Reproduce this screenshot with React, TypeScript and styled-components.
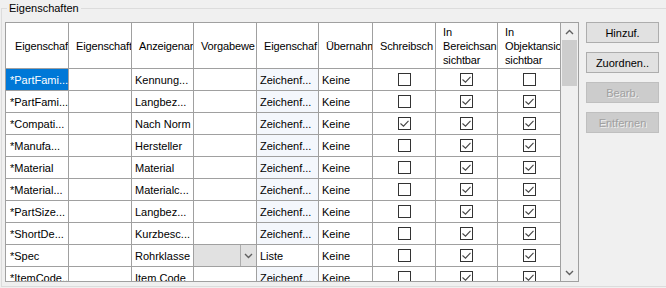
import styled, { createGlobalStyle } from 'styled-components';

const GlobalStyle = createGlobalStyle`
  html, body {
    margin: 0;
    padding: 0;
    background: #f0f0f0;
    overflow: hidden;
  }
  body {
    font-family: "Liberation Sans", Arial, sans-serif;
    font-size: 11px;
    color: #000;
  }
`;

const colWidths = [63, 63, 62, 63, 62, 54, 63, 62, 63];

const headers: string[][] = [
  ['Eigenschaf'],
  ['Eigenschaft'],
  ['Anzeigenar'],
  ['Vorgabewe'],
  ['Eigenschaf'],
  ['Übernahm'],
  ['Schreibsch'],
  ['In', 'Bereichsan', 'sichtbar'],
  ['In', 'Objektansic', 'sichtbar'],
];

interface RowData {
  name: string;
  label: string;
  type: string;
  combo?: boolean;
  write: boolean;
  area: boolean;
  obj: boolean;
}

const rows: RowData[] = [
  { name: '*PartFami...', label: 'Kennung...', type: 'Zeichenf...', write: false, area: true, obj: false },
  { name: '*PartFami...', label: 'Langbez...', type: 'Zeichenf...', write: false, area: true, obj: true },
  { name: '*Compati...', label: 'Nach Norm', type: 'Zeichenf...', write: true, area: true, obj: true },
  { name: '*Manufa...', label: 'Hersteller', type: 'Zeichenf...', write: false, area: true, obj: true },
  { name: '*Material', label: 'Material', type: 'Zeichenf...', write: false, area: true, obj: true },
  { name: '*Material...', label: 'Materialc...', type: 'Zeichenf...', write: false, area: true, obj: true },
  { name: '*PartSize...', label: 'Langbez...', type: 'Zeichenf...', write: false, area: true, obj: true },
  { name: '*ShortDe...', label: 'Kurzbesc...', type: 'Zeichenf...', write: false, area: true, obj: true },
  { name: '*Spec', label: 'Rohrklasse', type: 'Liste', combo: true, write: false, area: true, obj: true },
  { name: '*ItemCode...', label: 'Item Code', type: 'Zeichenf...', write: false, area: true, obj: true },
];

const App = () => {
  return (
    <>
      <GlobalStyle />
      <Group>
        <Legend>Eigenschaften</Legend>
        <Content>
          <GridFrame>
            <Table>
              {headers.map((lines, i) => (
                <HeadCell key={i} first={i === 0}>
                  <HeadText>
                    {lines.map((l, j) => (
                      <span key={j}>{l}</span>
                    ))}
                  </HeadText>
                </HeadCell>
              ))}
              {rows.map((r, i) => (
                <RowCells key={i} row={r} selected={i === 0} />
              ))}
            </Table>
            <ScrollBar>
              <ScrollArrow>
                <Chevron up />
              </ScrollArrow>
              <Track>
                <Thumb />
              </Track>
              <ScrollArrow>
                <Chevron />
              </ScrollArrow>
            </ScrollBar>
          </GridFrame>
          <Buttons>
            <Button>Hinzuf.</Button>
            <Button>Zuordnen..</Button>
            <Button disabled>Bearb.</Button>
            <Button disabled>Entfernen</Button>
          </Buttons>
        </Content>
      </Group>
    </>
  );
};

const RowCells = ({ row, selected }: { row: RowData; selected: boolean }) => (
  <>
    <Cell selected={selected} first>{row.name}</Cell>
    <Cell />
    <Cell>{row.label}</Cell>
    <Cell>
      {row.combo && (
        <Combo>
          <ComboField />
          <ComboButton>
            <Chevron />
          </ComboButton>
        </Combo>
      )}
    </Cell>
    <Cell tinted={!row.combo}>{row.type}</Cell>
    <Cell>Keine</Cell>
    <CheckCell>
      <CheckBox checked={row.write} />
    </CheckCell>
    <CheckCell>
      <CheckBox checked={row.area} />
    </CheckCell>
    <CheckCell>
      <CheckBox checked={row.obj} />
    </CheckCell>
  </>
);

const CheckBox = ({ checked }: { checked: boolean }) => (
  <Box>
    {checked && (
      <svg width="11" height="11" viewBox="0 0 11 11">
        <path d="M1.5 5.5 L4.5 8.2 L9.5 2.8" fill="none" stroke="#444" strokeWidth="1.1" />
      </svg>
    )}
  </Box>
);

const Chevron = ({ up }: { up?: boolean }) => (
  <svg width="9" height="6" viewBox="0 0 9 6">
    <path
      d={up ? 'M1 5 L4.5 1.5 L8 5' : 'M1 1 L4.5 4.5 L8 1'}
      fill="none"
      stroke="#606060"
      strokeWidth="1.4"
    />
  </svg>
);

const Group = styled.div`
  position: relative;
  margin: 8px 0 0 1px;
  width: 670px;
  height: 279px;
  box-sizing: border-box;
  border: 1px solid #dcdcdc;
`;

const Legend = styled.span`
  position: absolute;
  top: -8px;
  left: 5px;
  padding: 0 2px;
  line-height: 14px;
  background: #f0f0f0;
`;

const Content = styled.div`
  display: flex;
  align-items: flex-start;
  gap: 7px;
  padding: 13px 0 0 3px;
`;

const GridFrame = styled.div`
  display: flex;
  width: 574px;
  height: 260px;
  box-sizing: border-box;
  border: 1px solid #a0a0a0;
  background: #fff;
  overflow: hidden;
`;

const Table = styled.div`
  display: grid;
  grid-template-columns: ${colWidths.map((w) => `${w}px`).join(' ')};
  grid-auto-rows: 22px;
  grid-template-rows: 46px;
  align-content: start;
  width: 555px;
  height: 258px;
  overflow: hidden;
`;

const HeadCell = styled.div<{ first?: boolean }>`
  display: flex;
  align-items: center;
  box-sizing: border-box;
  padding-left: ${(p) => (p.first ? 9 : 7)}px;
  border-right: 1px solid #a0a0a0;
  border-bottom: 1px solid #a0a0a0;
  background: #fff;
  overflow: hidden;
  white-space: nowrap;
  letter-spacing: -0.15px;
`;

const HeadText = styled.div`
  display: flex;
  flex-direction: column;
  line-height: 14px;
`;

const Cell = styled.div<{ selected?: boolean; tinted?: boolean; first?: boolean }>`
  position: relative;
  display: flex;
  align-items: center;
  box-sizing: border-box;
  padding-left: ${(p) => (p.first ? 4 : 3)}px;
  border-right: 1px solid #a0a0a0;
  border-bottom: 1px solid #a0a0a0;
  background: ${(p) => (p.selected ? '#0078d7' : p.tinted ? '#f4f7fc' : '#fff')};
  color: ${(p) => (p.selected ? '#fff' : '#000')};
  white-space: nowrap;
  overflow: hidden;
`;

const CheckCell = styled.div`
  display: flex;
  align-items: center;
  justify-content: center;
  box-sizing: border-box;
  border-right: 1px solid #a0a0a0;
  border-bottom: 1px solid #a0a0a0;
  background: #fff;
  overflow: hidden;
`;

const Box = styled.div`
  display: flex;
  align-items: center;
  justify-content: center;
  width: 13px;
  height: 13px;
  box-sizing: border-box;
  border: 1px solid #333;
  background: #fff;
`;

const Combo = styled.div`
  display: flex;
  position: absolute;
  inset: 0;
  background: #e1e1e1;
`;

const ComboField = styled.div`
  flex: 1;
`;

const ComboButton = styled.div`
  display: flex;
  align-items: center;
  justify-content: center;
  width: 15px;
  border-left: 1px solid #adadad;
`;

const ScrollBar = styled.div`
  display: flex;
  flex-direction: column;
  width: 17px;
  border-left: 1px solid #a0a0a0;
  background: #f0f0f0;
`;

const ScrollArrow = styled.div`
  display: flex;
  align-items: center;
  justify-content: center;
  height: 17px;
`;

const Track = styled.div`
  flex: 1;
  padding: 0 1px;
`;

const Thumb = styled.div`
  height: 46px;
  background: #cdcdcd;
`;

const Buttons = styled.div`
  display: flex;
  flex-direction: column;
  gap: 9px;
`;

const Button = styled.button`
  width: 73px;
  height: 21px;
  padding: 0;
  box-sizing: border-box;
  border: 1px solid #adadad;
  background: #e1e1e1;
  font-family: "Liberation Sans", Arial, sans-serif;
  font-size: 11px;
  color: #000;
  &:disabled {
    background: #cccccc;
    border-color: #bfbfbf;
    color: #a0a0a0;
    text-shadow: 1px 1px 0 rgba(255, 255, 255, 0.7);
  }
`;

export default App;
